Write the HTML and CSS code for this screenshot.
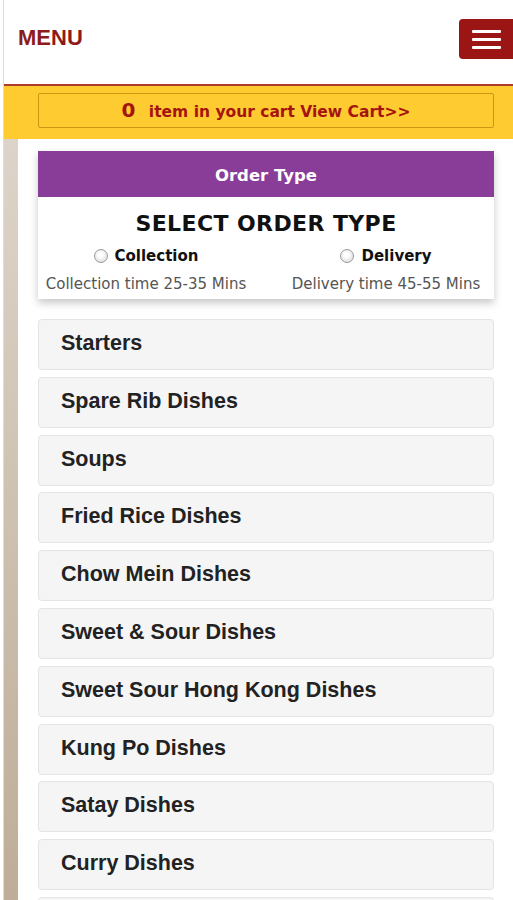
FILE: index.html
```html
<!DOCTYPE html>
<html lang="en">
<head>
    <meta charset="UTF-8">
    <meta name="viewport" content="width=device-width, initial-scale=1.0">
    <title>Menu</title>
    <link rel="stylesheet" href="styles.css">
</head>
<body>
    <div class="page">
        <header class="top">
            <span class="brand">MENU</span>
            <button class="burger" type="button" aria-label="Toggle menu">
                <span></span><span></span><span></span>
            </button>
        </header>

        <div class="cartbar">
            <a class="cartbox" href="#"><b class="count">0</b> item in your cart View Cart&gt;&gt;</a>
        </div>

        <main class="main">
            <section class="card">
                <div class="card-head">Order Type</div>
                <div class="card-body">
                    <h2 class="card-title">SELECT ORDER TYPE</h2>
                    <div class="types">
                        <div class="type">
                            <label><input type="radio" name="otype"> Collection</label>
                            <p>Collection time 25-35 Mins</p>
                        </div>
                        <div class="type">
                            <label><input type="radio" name="otype"> Delivery</label>
                            <p>Delivery time 45-55 Mins</p>
                        </div>
                    </div>
                </div>
            </section>

            <ul class="cats">
                <li>Starters</li>
                <li>Spare Rib Dishes</li>
                <li>Soups</li>
                <li>Fried Rice Dishes</li>
                <li>Chow Mein Dishes</li>
                <li>Sweet &amp; Sour Dishes</li>
                <li>Sweet Sour Hong Kong Dishes</li>
                <li>Kung Po Dishes</li>
                <li>Satay Dishes</li>
                <li>Curry Dishes</li>
                <li class="more"></li>
            </ul>
        </main>
    </div>
</body>
</html>
```

FILE: styles.css
```css
body { margin: 0; background: #fff; font-family: "Liberation Sans", Arial, sans-serif; overflow: hidden; }
.page { margin-left: 3px; border-left: 1px solid #dcdcdc; }

.top { height: 84px; display: flex; justify-content: space-between; align-items: flex-start; padding-left: 14px; box-sizing: border-box; }
.brand { margin-top: 25px; font-size: 22px; line-height: 26px; font-weight: bold; color: #8e1b1b; }
.burger { margin-top: 19px; width: 54px; height: 40px; background: #9b1515; border: none; border-radius: 4px 0 0 4px; padding: 0; display: flex; flex-direction: column; align-items: center; justify-content: center; gap: 5px; }
.burger span { display: block; width: 29px; height: 3px; background: #fff; border-radius: 1px; }

.cartbar { border-top: 2px solid #b23a2a; background: #fecb31; padding: 7px 19px 11px 34px; }
.cartbox { display: block; height: 35px; box-sizing: border-box; border: 1px solid #cf9615; border-radius: 2px; text-align: center; line-height: 33px; font-family: "DejaVu Sans", Verdana, sans-serif; font-weight: bold; font-size: 15.5px; color: #a5140f; text-decoration: none; }
.count { font-size: 20px; margin-right: 8px; }

.main { border-left: 14px solid #cfc3b3; border-image: linear-gradient(#ddd4c9, #bcab95) 1; padding: 12px 19px 0 20px; }

.card { background: #fff; box-shadow: 0 4px 8px rgba(0, 0, 0, 0.22); font-family: "DejaVu Sans", Verdana, sans-serif; }
.card-head { height: 46px; line-height: 50px; background: #8a3d98; color: #fff; text-align: center; font-weight: bold; font-size: 16.5px; }
.card-body { padding: 12px 0 5px; text-align: center; }
.card-title { margin: 0; font-size: 22px; line-height: 30px; letter-spacing: 0.4px; color: #111; }
.types { display: grid; grid-template-columns: 1fr 1fr; margin: 7px -12px 0; }
.type label { display: inline-flex; align-items: center; gap: 7px; font-weight: bold; font-size: 15px; line-height: 20px; color: #111; }
.type input { appearance: none; margin: 0; width: 14px; height: 14px; border-radius: 50%; border: 1px solid #9a9a9a; background: radial-gradient(circle at 45% 40%, #fff 20%, #d8d8d8 90%); }
.type p { margin: 7px 0 0; font-size: 15px; line-height: 20px; color: #555; }

.cats { list-style: none; margin: 20px 0 0; padding: 0; display: flex; flex-direction: column; gap: 6.8px; }
.cats li { height: 51px; box-sizing: border-box; display: flex; align-items: center; padding: 0 0 2px 22px; background: #f5f5f5; border: 1px solid #e4e4e4; border-radius: 4px; font-size: 21.5px; font-weight: bold; color: #222; }
```
